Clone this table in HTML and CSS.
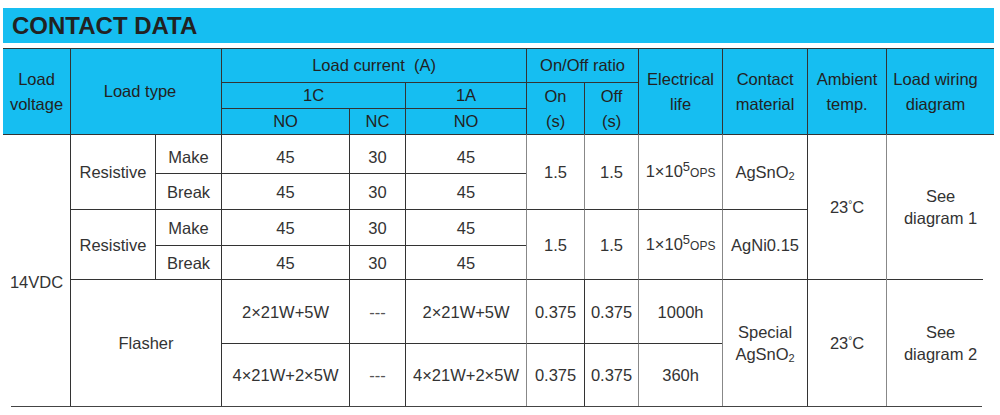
FILE: index.html
```html
<!DOCTYPE html>
<html>
<head>
<meta charset="utf-8">
<link rel="stylesheet" href="styles.css">
</head>
<body>
<div class="sheet">
  <div class="title">CONTACT DATA</div>
  <table class="grid">
    <colgroup>
      <col class="c1"><col class="c2"><col class="c3"><col class="c4"><col class="c5"><col class="c6">
      <col class="c7"><col class="c8"><col class="c9"><col class="c10"><col class="c11"><col class="c12">
    </colgroup>
    <thead>
      <tr class="ha">
        <td rowspan="3" class="nl">Load<br>voltage</td>
        <td rowspan="3" colspan="2" class="lt">Load type</td>
        <td colspan="3">Load current&nbsp;&nbsp;(A)</td>
        <td colspan="2">On/Off ratio</td>
        <td rowspan="3">Electrical<br>life</td>
        <td rowspan="3">Contact<br>material</td>
        <td rowspan="3">Ambient<br>temp.</td>
        <td rowspan="3" class="lw">Load wiring<br>diagram</td>
      </tr>
      <tr class="hb">
        <td colspan="2">1C</td>
        <td>1A</td>
        <td rowspan="2">On<br>(s)</td>
        <td rowspan="2">Off<br>(s)</td>
      </tr>
      <tr class="hc">
        <td>NO</td>
        <td>NC</td>
        <td>NO</td>
      </tr>
    </thead>
    <tbody>
      <tr class="r1">
        <td rowspan="6" class="nl volt">14VDC</td>
        <td rowspan="2">Resistive</td>
        <td class="lo">Make</td>
        <td class="lo">45</td>
        <td class="lo">30</td>
        <td class="lo">45</td>
        <td rowspan="2" class="gl">1.5</td>
        <td rowspan="2" class="gl">1.5</td>
        <td rowspan="2" class="gl"><span class="ops">1×10<span class="pw">5</span><span class="unit">OPS</span></span></td>
        <td rowspan="2" class="gl">AgSnO<span class="sb">2</span></td>
        <td rowspan="4">23<span class="deg">°</span>C</td>
        <td rowspan="4" class="gl">See<br>diagram 1</td>
      </tr>
      <tr class="r2">
        <td>Break</td>
        <td>45</td>
        <td>30</td>
        <td>45</td>
      </tr>
      <tr class="r3">
        <td rowspan="2">Resistive</td>
        <td>Make</td>
        <td>45</td>
        <td>30</td>
        <td>45</td>
        <td rowspan="2" class="gl">1.5</td>
        <td rowspan="2" class="gl">1.5</td>
        <td rowspan="2" class="gl"><span class="ops">1×10<span class="pw">5</span><span class="unit">OPS</span></span></td>
        <td rowspan="2" class="gl">AgNi0.15</td>
      </tr>
      <tr class="r4">
        <td>Break</td>
        <td>45</td>
        <td>30</td>
        <td>45</td>
      </tr>
      <tr class="r5">
        <td rowspan="2" colspan="2">Flasher</td>
        <td>2×21W+5W</td>
        <td class="dash">---</td>
        <td>2×21W+5W</td>
        <td class="gl">0.375</td>
        <td>0.375</td>
        <td class="gl">1000h</td>
        <td rowspan="2" class="gl">Special<br>AgSnO<span class="sb">2</span></td>
        <td rowspan="2">23<span class="deg">°</span>C</td>
        <td rowspan="2" class="gl short">See<br>diagram 2</td>
      </tr>
      <tr class="r6">
        <td>4×21W+2×5W</td>
        <td class="dash">---</td>
        <td>4×21W+2×5W</td>
        <td class="gl">0.375</td>
        <td>0.375</td>
        <td class="gl">360h</td>
      </tr>
    </tbody>
  </table>
  <div class="base"></div>
</div>
</body>
</html>
```

FILE: styles.css
```css
body {
  margin: 0;
  background: #fff;
  font-family: "Liberation Sans", Arial, sans-serif;
}

.sheet {
  width: 991px;
  padding: 8px 0 0 3px;
}

.title {
  height: 35px;
  box-sizing: border-box;
  background: #16bef1;
  display: flex;
  align-items: center;
  padding-left: 9px;
  margin-bottom: 5px;
  font-weight: bold;
  font-size: 24px;
  color: #222;
}

.grid {
  border-collapse: separate;
  border-spacing: 0;
  table-layout: fixed;
  width: 991px;
  font-size: 16.5px;
  color: #333;
}

.c1 { width: 67px; }
.c2 { width: 85px; }
.c3 { width: 66px; }
.c4 { width: 128px; }
.c5 { width: 56px; }
.c6 { width: 121px; }
.c7 { width: 58px; }
.c8 { width: 54px; }
.c9 { width: 84px; }
.c10 { width: 85px; }
.c11 { width: 79px; }
.c12 { width: 108px; }

.grid td {
  box-sizing: border-box;
  border-left: 1px solid #333;
  border-top: 1px solid #333;
  padding: 0;
  text-align: center;
  vertical-align: middle;
  line-height: 22px;
  white-space: nowrap;
}

.grid thead td {
  background: #16bef1;
  color: #222;
  line-height: 25px;
}

.grid thead td.lt { padding-right: 12px; }
.grid thead td.lw { padding-right: 10px; }

.ha { height: 34px; }
.hb { height: 26px; }
.hc { height: 26px; }
.r1 { height: 39px; }
.r2 { height: 36px; }
.r3 { height: 36px; }
.r4 { height: 34px; }
.r5 { height: 64px; }
.r6 { height: 63px; }

.grid td.nl { border-left: none; }
.grid td.gl { border-left-color: #888; }

.grid td.lo { padding-top: 5px; }

.grid td.volt {
  padding-top: 22px;
}

.grid td.short {
  border-top: none;
  background: linear-gradient(#333, #333) no-repeat left top / calc(100% - 11px) 1px;
}

.dash { color: #555; }

.ops { white-space: nowrap; }

.pw {
  font-size: 13px;
  vertical-align: 6px;
  line-height: 0;
}

.unit {
  font-size: 12px;
}

.sb {
  font-size: 11px;
  vertical-align: -2px;
  line-height: 0;
}

.deg {
  font-size: 10px;
  vertical-align: 5px;
  line-height: 0;
}

.base {
  height: 1px;
  background: #444;
  margin-left: 8px;
  width: 971px;
}
```
